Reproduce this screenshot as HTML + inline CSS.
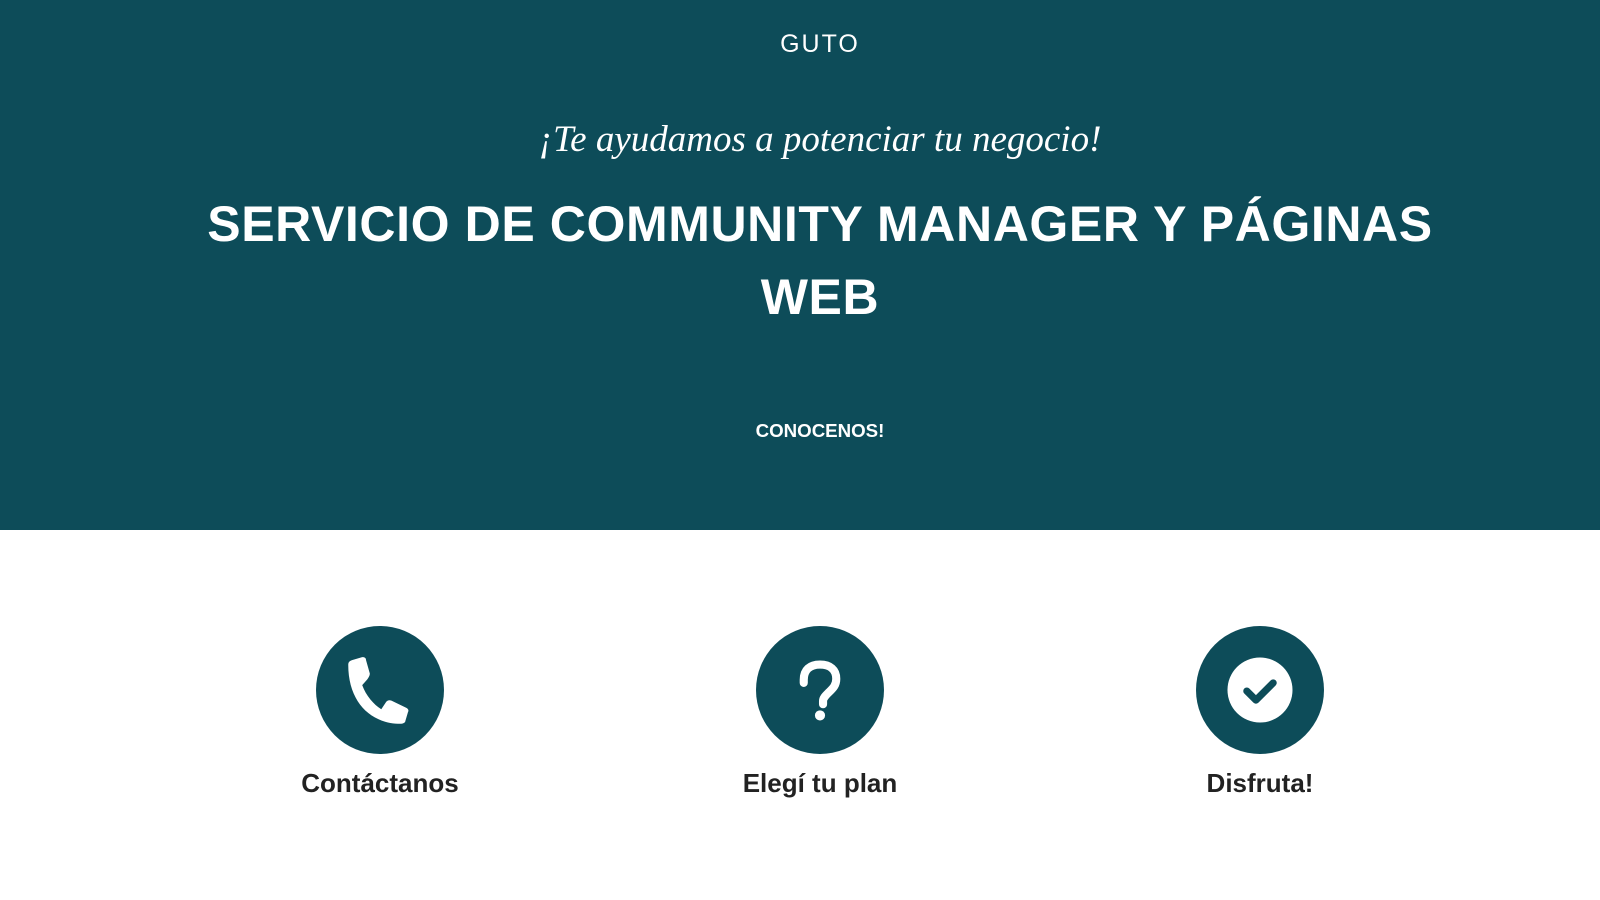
<!DOCTYPE html>
<html><head><meta charset="utf-8"><style>
body{margin:0;width:1600px;height:900px;overflow:hidden;background:#fff;font-family:"Liberation Sans",sans-serif}
.hero{position:absolute;left:0;top:0;width:1600px;height:530px;background:#0d4c59;color:#fff;text-align:center}
.logo{position:absolute;top:30px;left:0;width:1640px;font-size:25px;letter-spacing:2px;font-weight:400}
.sub{position:absolute;top:118px;left:0;width:1640px;font-family:"Liberation Serif",serif;font-style:italic;font-size:37px}
h1{position:absolute;top:188px;left:170px;width:1300px;margin:0;font-size:50px;line-height:73px;font-weight:700;letter-spacing:0.6px}
.btn{position:absolute;top:420px;left:0;width:1640px;font-size:18.7px;font-weight:700}
.c{position:absolute;width:128px;height:128px;border-radius:50%;background:#0d4c59;top:626px}
.c svg{position:absolute;left:0;top:0}
.l{position:absolute;top:768px;width:300px;text-align:center;font-weight:700;font-size:26px;color:#222}
</style></head><body>
<div class="hero">
<div class="logo">GUTO</div>
<div class="sub">¡Te ayudamos a potenciar tu negocio!</div>
<h1>SERVICIO DE COMMUNITY MANAGER Y PÁGINAS WEB</h1>
<div class="btn">CONOCENOS!</div>
</div>
<div class="c" style="left:316px"><svg width="128" height="128" viewBox="0 0 126 126"><g transform="translate(63 63) scale(1.25 0.95) translate(-60 -63)"><path d="M35 37c0-3 1-4 3-5l8-3c2 0 3 1 3 3l3 14c0 2-1 4-2 6l-4 6c3 11 9 20 15 25l4-8c1-1 2-2 4-1l11 7c2 1 3 3 2 5l-2 9c0 2-2 3-4 3C53 98 35 76 35 37z" fill="#fff"/></g></svg></div>
<div class="c" style="left:756px"><svg width="128" height="128" viewBox="0 0 126 126"><path d="M47 56v-3c0-10 6-15 16-15s16 5 16 14c0 7-4 10-8 14-3 3-5 5-5 8v3" fill="none" stroke="#fff" stroke-width="8" stroke-linecap="round"/><circle cx="63" cy="88" r="5" fill="#fff"/></svg></div>
<div class="c" style="left:1196px"><svg width="128" height="128" viewBox="0 0 126 126"><circle cx="63" cy="63" r="32" fill="#fff"/><path d="M50 64l9 9 17-17" fill="none" stroke="#0d4c59" stroke-width="7" stroke-linecap="round" stroke-linejoin="round"/></svg></div>
<div class="l" style="left:230px">Contáctanos</div>
<div class="l" style="left:670px">Elegí tu plan</div>
<div class="l" style="left:1110px">Disfruta!</div>
</body></html>
